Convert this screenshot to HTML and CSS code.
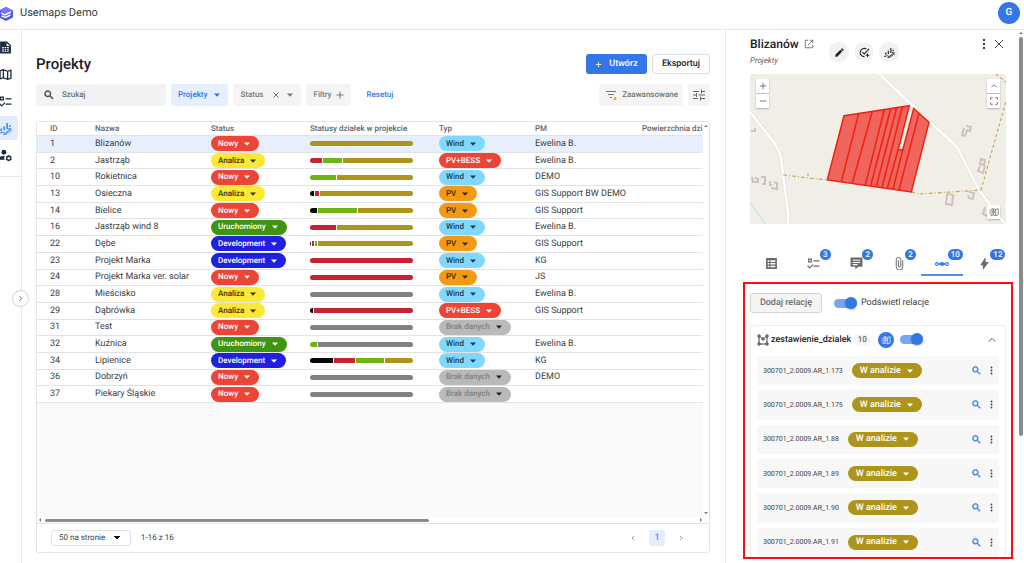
FILE: index.html
```html
<!DOCTYPE html>
<html lang="pl">
<head>
<meta charset="utf-8">
<title>Usemaps Demo</title>
<link rel="stylesheet" href="styles.css">
</head>
<body>
<svg class="defs" aria-hidden="true">
  <symbol id="caret" viewBox="0 0 8 8"><path d="M1 2.500h6L4 5.700z"/></symbol>
  <symbol id="search" viewBox="0 0 24 24"><path stroke="currentColor" stroke-width=".8" d="M9.500 3a6.500 6.500 0 0 1 4.900 10.800l.3.2h.8l5 5-1.500 1.500-5-5v-.8l-.2-.3A6.500 6.500 0 1 1 9.500 3m0 2a4.500 4.500 0 1 0 0 9 4.500 4.500 0 0 0 0-9z"/></symbol>
  <symbol id="dots" viewBox="0 0 24 24"><circle cx="12" cy="4" r="2.400"/><circle cx="12" cy="12" r="2.400"/><circle cx="12" cy="20" r="2.400"/></symbol>
  <symbol id="tasks" viewBox="0 0 24 24"><path fill="none" stroke="currentColor" stroke-width="2.200" d="M3 4h5v5H3zM12 7h11M12 17h11M1 16l4 4 6-6"/></symbol>
  <symbol id="chart" viewBox="0 0 24 24"><path fill="none" stroke="currentColor" stroke-width="2.600" d="M4 12v5M9.500 8v7M15 2v11M20 6v3"/><path fill="none" stroke="currentColor" stroke-width="1.800" d="M0 21l7-2 4 2 10-8M17 12.500h5v5M8 23h4l8-6"/></symbol>
  <symbol id="map" viewBox="0 0 24 24"><path fill="none" stroke="currentColor" stroke-width="2.400" d="M2 5l6-2 8 3 6-2v15l-6 2-8-3-6 2zM8 3v15M16 6v15"/></symbol>
  <symbol id="mapsel" viewBox="0 0 24 24"><path fill="none" stroke="currentColor" stroke-width="1.700" d="M5 6l5-2 6 2 6-2v15l-6 2-6-2-5 2v-5M10 4v15M16 6v15M1 9h12v5H1"/></symbol>
</svg>

<header class="topbar">
  <svg class="logo" viewBox="0 0 16 16"><path fill="#4a54ee" d="M8 1l7 3.500v7L8 15l-7-3.500v-7z"/><path fill="#6f78ff" d="M8 1l7 3.500L8 8 1 4.500z"/><path fill="none" stroke="#fff" stroke-width="1.500" d="M3 7l4 2 6-3M3.500 10l4 1.500L12.500 9"/></svg>
  <span class="brand">Usemaps Demo</span>
  <button class="avatar">G</button>
</header>

<div class="shell">
  <nav class="rail" aria-label="Menu">
    <a class="rail-item" href="#" aria-label="Dokumenty"><svg viewBox="0 0 24 24"><path fill="currentColor" fill-rule="evenodd" d="M2 1h13l7 7v15H2zM6 11v9h12v-9zM14 3v6h6z"/><path fill="none" stroke="currentColor" stroke-width="1.500" d="M6 14h12M6 17h12M10 11v9M14 11v9"/></svg></a>
    <a class="rail-item" href="#" aria-label="Mapa"><svg><use href="#map"/></svg></a>
    <a class="rail-item" href="#" aria-label="Zadania"><svg><use href="#tasks"/></svg></a>
    <a class="rail-item is-active" href="#" aria-label="Projekty"><svg><use href="#chart"/></svg></a>
    <a class="rail-item" href="#" aria-label="Administracja"><svg viewBox="0 0 24 24"><circle cx="9" cy="6" r="4.500" fill="currentColor"/><path fill="currentColor" d="M0 20v-3c0-3 5-4.500 11-4.200-2 2.200-2 5 0 7.200z"/><circle cx="18" cy="17" r="3.700" fill="none" stroke="currentColor" stroke-width="2.500"/><path stroke="currentColor" stroke-width="2" stroke-dasharray="2 7.600" d="M18 11v12M12.800 14l10.400 6M12.800 20l10.400-6"/></svg></a>
  </nav>

  <main class="main">
    <button class="expander" aria-label="Rozwiń"><svg viewBox="0 0 8 8"><path class="line" d="M3 1.500L5.500 4 3 6.500"/></svg></button>
    <div class="title-row">
      <h1>Projekty</h1>
      <button class="btn primary"><svg viewBox="0 0 8 8"><path class="line" d="M4 1v6M1 4h6"/></svg>Utwórz</button>
      <button class="btn outline">Eksportuj</button>
    </div>

    <div class="filters">
      <label class="search"><svg><use href="#search"/></svg><input type="text" placeholder="Szukaj" aria-label="Szukaj"></label>
      <button class="chip blue">Projekty<svg><use href="#caret"/></svg></button>
      <button class="chip">Status<svg class="cross" viewBox="0 0 8 8"><path class="line" d="M1.500 1.500l5 5M6.500 1.500l-5 5"/></svg><svg><use href="#caret"/></svg></button>
      <button class="chip add">Filtry<svg viewBox="0 0 8 8"><path class="line" d="M4 .5v7M.5 4h7"/></svg></button>
      <button class="reset">Resetuj</button>
      <button class="chip advanced"><svg viewBox="0 0 12 12"><path class="line" d="M1 2.500h10M3 5.500h6M5 8.500h2"/><circle cx="10" cy="9.500" r="1.500" fill="#f0a51c"/></svg>Zaawansowane</button>
      <button class="chip square" aria-label="Kolumny"><svg viewBox="0 0 12 12"><path class="line" d="M0 2.500h6M9 2.500h3M8.500.5v4M0 6h3M5.500 6H12M3.500 4v4M0 9.500h5M8 9.500h4M7.500 7.500v4"/></svg></button>
    </div>

    <section class="grid-card">
      <div class="grid-view">
        <div class="grid-scroll">
          <table>
            <colgroup><col class="c-id"><col class="c-name"><col class="c-status"><col class="c-bar"><col class="c-type"><col class="c-pm"><col></colgroup>
            <thead><tr><th>ID</th><th>Nazwa</th><th>Status</th><th>Statusy działek w projekcie</th><th>Typ</th><th>PM</th><th>Powierzchnia dzi</th></tr></thead>
            <tbody>
              <tr class="selected"><td>1</td><td>Blizanów</td><td><button class="pill red">Nowy<svg><use href="#caret"/></svg></button></td><td><div class="bar"><i class="s-gold"></i></div></td><td><button class="pill sky">Wind<svg><use href="#caret"/></svg></button></td><td>Ewelina B.</td><td></td></tr>
              <tr><td>2</td><td>Jastrząb</td><td><button class="pill yellow">Analiza<svg><use href="#caret"/></svg></button></td><td><div class="bar"><i class="s-red" style="width:12%"></i><i class="s-green" style="width:18%"></i><i class="s-gold"></i></div></td><td><button class="pill red">PV+BESS<svg><use href="#caret"/></svg></button></td><td>Ewelina B.</td><td></td></tr>
              <tr><td>10</td><td>Rokietnica</td><td><button class="pill red">Nowy<svg><use href="#caret"/></svg></button></td><td><div class="bar"><i class="s-green" style="width:25%"></i><i class="s-gold"></i></div></td><td><button class="pill sky">Wind<svg><use href="#caret"/></svg></button></td><td>DEMO</td><td></td></tr>
              <tr><td>13</td><td>Osieczna</td><td><button class="pill yellow">Analiza<svg><use href="#caret"/></svg></button></td><td><div class="bar"><i class="s-black" style="width:4%"></i><i class="s-red" style="width:4%"></i><i class="s-gold"></i></div></td><td><button class="pill orange">PV<svg><use href="#caret"/></svg></button></td><td>GIS Support BW DEMO</td><td></td></tr>
              <tr><td>14</td><td>Bielice</td><td><button class="pill red">Nowy<svg><use href="#caret"/></svg></button></td><td><div class="bar"><i class="s-black" style="width:7%"></i><i class="s-green" style="width:38%"></i><i class="s-gold"></i></div></td><td><button class="pill orange">PV<svg><use href="#caret"/></svg></button></td><td>GIS Support</td><td></td></tr>
              <tr><td>16</td><td>Jastrząb wind 8</td><td><button class="pill green">Uruchomiony<svg><use href="#caret"/></svg></button></td><td><div class="bar"><i class="s-red" style="width:25%"></i><i class="s-gold"></i></div></td><td><button class="pill sky">Wind<svg><use href="#caret"/></svg></button></td><td>Ewelina B.</td><td></td></tr>
              <tr><td>22</td><td>Dębe</td><td><button class="pill navy">Development<svg><use href="#caret"/></svg></button></td><td><div class="bar"><i class="s-black" style="width:1%"></i><i class="s-red" style="width:2%"></i><i class="s-green" style="width:2%"></i><i class="s-gold"></i></div></td><td><button class="pill orange">PV<svg><use href="#caret"/></svg></button></td><td>GIS Support</td><td></td></tr>
              <tr><td>23</td><td>Projekt Marka</td><td><button class="pill navy">Development<svg><use href="#caret"/></svg></button></td><td><div class="bar"><i class="s-red"></i></div></td><td><button class="pill sky">Wind<svg><use href="#caret"/></svg></button></td><td>KG</td><td></td></tr>
              <tr><td>24</td><td>Projekt Marka ver. solar</td><td><button class="pill red">Nowy<svg><use href="#caret"/></svg></button></td><td><div class="bar"><i class="s-red"></i></div></td><td><button class="pill orange">PV<svg><use href="#caret"/></svg></button></td><td>JS</td><td></td></tr>
              <tr><td>28</td><td>Mieścisko</td><td><button class="pill yellow">Analiza<svg><use href="#caret"/></svg></button></td><td><div class="bar"><i class="s-gray"></i></div></td><td><button class="pill sky">Wind<svg><use href="#caret"/></svg></button></td><td>Ewelina B.</td><td></td></tr>
              <tr><td>29</td><td>Dąbrówka</td><td><button class="pill yellow">Analiza<svg><use href="#caret"/></svg></button></td><td><div class="bar"><i class="s-black" style="width:3%"></i><i class="s-red"></i></div></td><td><button class="pill red">PV+BESS<svg><use href="#caret"/></svg></button></td><td>GIS Support</td><td></td></tr>
              <tr><td>31</td><td>Test</td><td><button class="pill red">Nowy<svg><use href="#caret"/></svg></button></td><td><div class="bar"><i class="s-gray"></i></div></td><td><button class="pill none">Brak danych<svg><use href="#caret"/></svg></button></td><td></td><td></td></tr>
              <tr><td>32</td><td>Kuźnica</td><td><button class="pill green">Uruchomiony<svg><use href="#caret"/></svg></button></td><td><div class="bar"><i class="s-green" style="width:7%"></i><i class="s-gray"></i></div></td><td><button class="pill sky">Wind<svg><use href="#caret"/></svg></button></td><td>Ewelina B.</td><td></td></tr>
              <tr><td>34</td><td>Lipienice</td><td><button class="pill navy">Development<svg><use href="#caret"/></svg></button></td><td><div class="bar"><i class="s-black" style="width:22%"></i><i class="s-red" style="width:21%"></i><i class="s-green" style="width:27%"></i><i class="s-gold"></i></div></td><td><button class="pill sky">Wind<svg><use href="#caret"/></svg></button></td><td>KG</td><td></td></tr>
              <tr><td>36</td><td>Dobrzyń</td><td><button class="pill red">Nowy<svg><use href="#caret"/></svg></button></td><td><div class="bar"><i class="s-gray"></i></div></td><td><button class="pill none">Brak danych<svg><use href="#caret"/></svg></button></td><td>DEMO</td><td></td></tr>
              <tr><td>37</td><td>Piekary Śląskie</td><td><button class="pill red">Nowy<svg><use href="#caret"/></svg></button></td><td><div class="bar"><i class="s-gray"></i></div></td><td><button class="pill none">Brak danych<svg><use href="#caret"/></svg></button></td><td></td><td></td></tr>
            </tbody>
          </table>
        </div>
        <div class="vbar"><svg viewBox="0 0 4 4"><path d="M0 3h4L2 1z"/></svg><svg viewBox="0 0 4 4"><path d="M0 1h4L2 3z"/></svg></div>
      </div>
      <div class="hbar"><svg viewBox="0 0 4 4"><path d="M3 0v4L1 2z"/></svg><div class="htrack"><div class="hthumb"></div></div><svg viewBox="0 0 4 4"><path d="M1 0v4l2-2z"/></svg></div>
      <footer class="pager">
        <select aria-label="Wierszy na stronie"><option>50 na stronie</option></select>
        <span class="count">1-16 z 16</span>
        <button class="page" aria-label="Poprzednia"><svg viewBox="0 0 8 8"><path class="line" d="M5 2L3 4l2 2"/></svg></button>
        <button class="page current">1</button>
        <button class="page" aria-label="Następna"><svg viewBox="0 0 8 8"><path class="line" d="M3 2l2 2-2 2"/></svg></button>
      </footer>
    </section>
  </main>

  <aside class="panel">
    <div class="panel-body">
      <div class="panel-head">
        <div class="heading">
          <h2>Blizanów <svg viewBox="0 0 12 12"><path class="line" d="M5 1.500H1.500v9h9V7M7 1.500h3.500V5M10.500 1.500L4.500 7.500"/></svg></h2>
          <p>Projekty</p>
        </div>
        <div class="actions">
          <button aria-label="Edytuj"><svg viewBox="0 0 24 24"><path fill="currentColor" d="M3 17v4h4L18 10l-4-4zM20.700 7.300a1.200 1.200 0 0 0 0-1.700l-2.300-2.300a1.200 1.200 0 0 0-1.700 0L15 5l4 4z"/></svg></button>
          <button aria-label="Dodaj zadanie"><svg viewBox="0 0 24 24"><path fill="none" stroke="currentColor" stroke-width="2.300" d="M16 4.200A9 9 0 1 0 12 21M7.500 11l4 4L22 4M18.500 14v8M14.500 18h8"/></svg></button>
          <button aria-label="Wykres"><svg><use href="#chart"/></svg></button>
        </div>
        <div class="window-tools">
          <button aria-label="Więcej"><svg><use href="#dots"/></svg></button>
          <button aria-label="Zamknij"><svg viewBox="0 0 12 12"><path class="line" d="M2 2l8 8M10 2l-8 8"/></svg></button>
        </div>
      </div>

      <div class="map">
        <svg class="map-art" viewBox="0 0 256 150" preserveAspectRatio="xMidYMid slice">
          <rect width="256" height="150" fill="#f1eee8"/>
          <path d="M0 128l15 22" stroke="#a9dce8" stroke-width="1" fill="none"/>
          <g fill="none" stroke="#dcdad6" stroke-width="3.600"><path id="road-a" d="M127-2l80 75 22 43 26 34"/><path id="road-b" d="M0 38l22 28q7 9 9 18l7 55v12"/></g>
          <g fill="none" stroke="#fff" stroke-width="2.600"><use href="#road-a"/><use href="#road-b"/></g>
          <g fill="none" stroke="#c5a561" stroke-width="1.200" stroke-dasharray="4 2 1 2"><path d="M33 101l44 5M161 118l9 2 61-4"/><path stroke-dasharray="3 2.500" d="M231 116l25-89M246 0l11 9"/></g>
          <g fill="none" stroke="#cfc2bb" stroke-width="2"><path d="M216 52l5 1-1 4-3-1-2 6-3-1 2-7M231 85l4 1-1 5-4-1zM230 92l-2 5 5 2 2-7M197 120l6 1-1 10-6-1zM219 118l5 1-1 6-4-1-1-3M235 133l-2 7 4 2M1 57h4v-3M2 103l1 5h5v-3l-3-1M11 103h4v7h-3M20 107v4h2M24 108l3 1v6l-6-1M58 99v3"/></g>
          <path d="M94 41.700L159.300 31.700 148.300 75.300 152.700 76.300 163.700 34.300 179 48.300 161.300 118 77.300 106z" fill="#f0655e" stroke="#ee2211" stroke-width="1.500"/>
          <path fill="none" stroke="#ee2211" stroke-width="1.500" d="M108.700 39.300L91.300 107.700M122.300 37.300L102.300 109.300M134.300 35.700L115.300 111M140.700 34.700L120.700 111.700M146.700 33.700L126.300 112.300M152.300 33L132 113.300M148.300 75.300L137.300 114.300M152.700 76.300L143 115.300M169 39.300L149 116"/>
        </svg>
        <div class="map-tools left"><button aria-label="Przybliż"><svg viewBox="0 0 12 12"><path class="line" d="M6 2v8M2 6h8"/></svg></button><button aria-label="Oddal"><svg viewBox="0 0 12 12"><path class="line" d="M2 6h8"/></svg></button></div>
        <div class="map-tools right"><button aria-label="Zwiń mapę"><svg viewBox="0 0 12 12"><path class="line" d="M3 7.500l3-3 3 3"/></svg></button><button aria-label="Pełny ekran"><svg viewBox="0 0 12 12"><path class="line" d="M2 4.500V2h2.500M7.500 2H10v2.500M10 7.500V10H7.500M4.500 10H2V7.500"/></svg></button></div>
        <div class="map-tools bottom"><button aria-label="Warstwy"><svg><use href="#mapsel"/></svg></button></div>
      </div>

      <div class="tabs" role="tablist">
        <button role="tab" aria-label="Atrybuty"><svg viewBox="0 0 24 24"><path fill="currentColor" fill-rule="evenodd" d="M2 2h20v20H2zM5 6v3h3V6zM10 6v3h9V6zM5 11v3h3v-3zM10 11v3h9v-3zM5 16v3h3v-3zM10 16v3h9v-3z"/></svg></button>
        <button role="tab" aria-label="Zadania"><svg><use href="#tasks"/></svg><span class="badge">3</span></button>
        <button role="tab" aria-label="Komentarze"><svg viewBox="0 0 24 24"><path fill="currentColor" fill-rule="evenodd" d="M1 1h22v17H15l-5 5v-5H1zM5 5v2h14V5zM5 9v2h14V9zM5 13v2h9v-2z"/></svg><span class="badge">2</span></button>
        <button role="tab" aria-label="Załączniki"><svg viewBox="0 0 24 24"><path fill="none" stroke="currentColor" stroke-width="1.800" d="M18 6v12a6 6 0 0 1-12 0V5a4 4 0 0 1 8.500 0v12a2.300 2.300 0 0 1-4.500 0V6"/></svg><span class="badge">2</span></button>
        <button role="tab" aria-label="Relacje" aria-selected="true"><svg viewBox="0 0 24 24"><path stroke="currentColor" stroke-width="2.500" d="M4 12h16"/><circle cx="3.500" cy="12" r="2.500" fill="#fff" stroke="currentColor" stroke-width="2"/><circle cx="12" cy="12" r="3.600" fill="currentColor"/><circle cx="20.500" cy="12" r="2.500" fill="#fff" stroke="currentColor" stroke-width="2"/></svg><span class="badge">10</span></button>
        <button role="tab" aria-label="Akcje"><svg viewBox="0 0 24 24"><path fill="currentColor" d="M14 0v9h6L9 24v-9H4z"/></svg><span class="badge">12</span></button>
      </div>

      <section class="relations">
        <div class="rel-bar">
          <button class="add-rel">Dodaj relację</button>
          <label><input class="switch" type="checkbox" checked>Podświetl relacje</label>
        </div>
        <div class="accordion">
          <div class="acc-head">
            <svg class="poly" viewBox="0 0 12 12"><path class="line" d="M1 1h2v2H1zM9 1h2v2H9zM1 9h2v2H1zM9 9h2v2H9zM5 4h2v2H5zM2 3v6M10 3v6M3 10h6M3 2.500L5 4.500M9 2.500L7 4.500"/></svg>
            <strong>zestawienie_dzialek</strong>
            <span class="total">10</span>
            <button class="round" aria-label="Pokaż na mapie"><svg><use href="#mapsel"/></svg></button>
            <input class="switch" type="checkbox" checked aria-label="Podświetl">
            <button class="fold" aria-label="Zwiń"><svg viewBox="0 0 12 12"><path class="line" d="M2 8l4-4 4 4"/></svg></button>
          </div>
          <ul class="parcels">
            <li><span>300701_2.0009.AR_1.173</span><button class="pill gold">W analizie<svg><use href="#caret"/></svg></button><button class="ico find" aria-label="Znajdź"><svg><use href="#search"/></svg></button><button class="ico" aria-label="Więcej"><svg><use href="#dots"/></svg></button></li>
            <li><span>300701_2.0009.AR_1.175</span><button class="pill gold">W analizie<svg><use href="#caret"/></svg></button><button class="ico find" aria-label="Znajdź"><svg><use href="#search"/></svg></button><button class="ico" aria-label="Więcej"><svg><use href="#dots"/></svg></button></li>
            <li><span>300701_2.0009.AR_1.88</span><button class="pill gold">W analizie<svg><use href="#caret"/></svg></button><button class="ico find" aria-label="Znajdź"><svg><use href="#search"/></svg></button><button class="ico" aria-label="Więcej"><svg><use href="#dots"/></svg></button></li>
            <li><span>300701_2.0009.AR_1.89</span><button class="pill gold">W analizie<svg><use href="#caret"/></svg></button><button class="ico find" aria-label="Znajdź"><svg><use href="#search"/></svg></button><button class="ico" aria-label="Więcej"><svg><use href="#dots"/></svg></button></li>
            <li><span>300701_2.0009.AR_1.90</span><button class="pill gold">W analizie<svg><use href="#caret"/></svg></button><button class="ico find" aria-label="Znajdź"><svg><use href="#search"/></svg></button><button class="ico" aria-label="Więcej"><svg><use href="#dots"/></svg></button></li>
            <li><span>300701_2.0009.AR_1.91</span><button class="pill gold">W analizie<svg><use href="#caret"/></svg></button><button class="ico find" aria-label="Znajdź"><svg><use href="#search"/></svg></button><button class="ico" aria-label="Więcej"><svg><use href="#dots"/></svg></button></li>
          </ul>
        </div>
      </section>
    </div>
    <div class="panel-scroll"><svg viewBox="0 0 4 4"><path d="M0 3h4L2 1z"/></svg><div class="panel-thumb"></div></div>
  </aside>
</div>
</body>
</html>
```

FILE: styles.css
```css
* { box-sizing: border-box; }
body {
  margin: 0;
  height: 100vh;
  display: flex;
  flex-direction: column;
  overflow: hidden;
  background: #fff;
  color: #3c4043;
  font: 9px/12px Roboto, "Liberation Sans", sans-serif;
  text-rendering: geometricPrecision;
}
button, input, select { font: inherit; color: inherit; margin: 0; text-rendering: inherit; }
button { border: 0; padding: 0; background: none; display: inline-flex; align-items: center; justify-content: center; white-space: nowrap; }
svg { display: block; fill: currentColor; flex: none; }
.line { fill: none; stroke: currentColor; stroke-width: 1; }
.defs { position: absolute; width: 0; height: 0; }

.topbar { display: flex; align-items: center; height: 30px; padding-right: 4px; border-bottom: 1px solid #e6e7e9; }
.logo { width: 16px; height: 16px; margin-left: -2px; margin-bottom: 2px; }
.brand { margin-left: 6px; margin-bottom: 3px; font-size: 11px; color: #3c4043; }
.avatar { width: 22px; height: 22px; margin-left: auto; margin-bottom: 3px; border-radius: 50%; background: #3376e8; color: #fff; font-size: 10px; font-weight: 500; }

.shell { display: flex; flex: 1; min-height: 0; }
.rail { width: 22px; padding-top: 5px; border-right: 1px solid #e6e7e9; color: #1d2b3e; }
.rail-item { display: flex; align-items: center; width: 18px; height: 24px; margin-bottom: 3px; border-radius: 0 2px 2px 0; color: inherit; }
.rail-item:last-child { width: 21px; height: 34px; padding-bottom: 8px; border-bottom: 1px solid #e6e7e9; border-radius: 0; }
.rail-item svg { width: 13px; height: 13px; margin-left: -1px; }
.rail-item.is-active { background: #e1edfd; color: #3376e8; }

.main { position: relative; display: flex; flex: 1; flex-direction: column; min-width: 0; padding: 24px 15px 10px 14px; }
.expander { position: absolute; top: 260px; left: -10px; width: 17px; height: 17px; border: 1px solid #cfd1d4; border-radius: 50%; background: #fff; }
.expander svg { width: 7px; height: 7px; }
.title-row { display: flex; align-items: center; gap: 5px; }
h1 { flex: 1; margin: 0; font-size: 15px; line-height: 20px; font-weight: 500; color: #202124; }
.btn { height: 20px; border-radius: 3px; font-weight: 500; }
.primary { gap: 7px; width: 61px; background: #3376e8; color: #fff; }
.primary svg { width: 7px; height: 7px; }
.outline { width: 58px; border: 1px solid #dadce0; color: #202124; }

.filters { display: flex; align-items: center; gap: 5px; margin-top: 10px; }
.search { display: flex; align-items: center; gap: 7px; width: 130px; height: 22px; padding: 0 7px; border-radius: 3px; background: #f1f3f5; }
.search svg { width: 12px; height: 12px; }
.search input { flex: 1; min-width: 0; padding: 0; border: 0; outline: 0; background: none; font-size: 8px; }
.search input::placeholder { color: #4d5156; opacity: 1; }
.chip { gap: 6px; height: 22px; padding: 0 7px; border-radius: 3px; background: #f4f4f4; color: #757575; font-size: 8px; font-weight: 500; }
.chip svg { width: 8px; height: 8px; }
.chip .cross { margin-left: 3px; }
.chip.blue { background: #e6effd; color: #3376e8; }
.chip.add { gap: 5px; }
.chip.advanced { gap: 5px; margin-left: auto; padding: 0 5px 0 6px; }
.chip.advanced svg, .chip.square svg { width: 12px; height: 12px; }
.chip.square { width: 22px; padding: 0; color: #5f6368; }
.reset { margin-left: 10px; color: #3376e8; font-size: 8px; font-weight: 500; }

.grid-card { display: flex; flex: 1; flex-direction: column; min-height: 0; margin-top: 15px; border: 1px solid #e4e5e7; border-radius: 3px; }
.grid-view { display: flex; flex: 1; min-height: 0; }
.grid-scroll { flex: 1; min-width: 0; overflow: hidden; background: #fafafa; }
.vbar { display: flex; flex-direction: column; justify-content: space-between; align-items: center; width: 6px; padding: 2px 0; color: #757575; }
.vbar svg, .hbar svg { width: 4px; height: 4px; }
table { width: 100%; height: 281px; border-collapse: separate; border-spacing: 0; table-layout: fixed; background: #fff; }
.c-id { width: 58px; }
.c-name { width: 116px; }
.c-status { width: 99px; }
.c-bar { width: 129px; }
.c-type { width: 96px; }
.c-pm { width: 107px; }
th, td { padding: 0; border-bottom: 1px solid #e2e3e5; text-align: left; white-space: nowrap; overflow: hidden; vertical-align: middle; }
th:first-child, td:first-child { padding-left: 13px; }
th { height: 14px; font-size: 8px; font-weight: 500; color: #5f6368; line-height: 12px; }
td { line-height: 12px; }
.selected td { background: #e8effc; }
.pill { display: flex; gap: 5px; height: 15px; padding: 0 8px 0 7px; border-radius: 8px; font-size: 8px; font-weight: 500; }
.pill svg { width: 8px; height: 8px; }
.red { background: #ec4435; color: #fff; }
.yellow { background: #fbe936; color: #33300a; }
.green { background: #3f9410; color: #fff; }
.navy { background: #2020e0; color: #fff; }
.sky { background: #80d8ff; color: #1a3a47; }
.orange { background: #f29a15; color: #3b2607; }
.none { background: #b9b9b9; color: #808080; }
.none svg { color: #222; }
.gold { background: #ad951c; color: #fff; }
.bar { display: flex; gap: 1px; width: 103px; height: 5px; border-radius: 3px; overflow: hidden; }
.bar i:last-child { flex: 1; }
.s-gold { background: #ad951c; }
.s-red { background: #c82333; }
.s-green { background: #6cb513; }
.s-black { background: #080808; }
.s-gray { background: #818181; }
.hbar { display: flex; align-items: center; gap: 3px; height: 6px; padding: 0 6px 0 1px; color: #757575; }
.htrack { flex: 1; }
.hthumb { width: 59%; height: 3px; border-radius: 2px; background: #8b8b8b; }
.pager { display: flex; align-items: center; height: 29px; padding: 0 20px 0 14px; border-top: 1px solid #e4e5e7; font-size: 8px; }
.pager select {
  width: 80px; height: 16px; padding: 0 7px; border: 1px solid #e0e1e3; border-radius: 3px; appearance: none;
  background: linear-gradient(to bottom left, #111 50%, transparent 51%) 62px 5px / 3px 4px no-repeat, linear-gradient(to bottom right, #111 50%, transparent 51%) 65px 5px / 3px 4px no-repeat;
}
.count { margin: 0 auto 0 10px; }
.page { width: 16px; height: 16px; margin-left: 8px; border-radius: 2px; color: #9aa0a6; }
.page svg { width: 8px; height: 8px; }
.page.current { background: #e4eefd; color: #3376e8; font-size: 9px; }

.panel { display: flex; width: 299px; border-left: 1px solid #e6e7e9; }
.panel-body { display: flex; flex: 1; flex-direction: column; min-width: 0; padding: 6px 6px 4px 17px; }
.panel-head { display: flex; margin-left: 7px; height: 38px; }
.heading { width: 79px; }
h2 { display: flex; align-items: center; gap: 5px; margin: 0; font-size: 12px; line-height: 16px; font-weight: 500; color: #202124; }
h2 svg { width: 10px; height: 10px; color: #5f6368; }
.heading p { margin: 3px 0 0; font-size: 8px; line-height: 12px; font-style: italic; color: #5f6368; }
.actions { display: flex; gap: 5px; padding-top: 6px; }
.actions button { width: 20px; height: 20px; border-radius: 50%; background: #f2f2f2; color: #202124; }
.actions svg { width: 11px; height: 11px; }
.window-tools { display: flex; gap: 3px; margin-left: auto; margin-right: 8px; height: 15px; color: #3c4043; }
.window-tools svg { width: 12px; height: 12px; }
.map { position: relative; height: 150px; margin: 0 7px; border-radius: 3px; overflow: hidden; }
.map-art { width: 100%; height: 100%; }
.map-tools { position: absolute; display: grid; gap: 1px; }
.map-tools.left { top: 5px; left: 6px; }
.map-tools.right { top: 5px; right: 6px; }
.map-tools.bottom { right: 6px; bottom: 5px; }
.map-tools button { width: 13px; height: 14px; border-radius: 1px; background: #fff; box-shadow: 0 1px 2px #0004; color: #5f6368; }
.map-tools svg { width: 10px; height: 10px; }

.tabs { display: grid; grid-template-columns: repeat(6, 1fr); height: 27px; margin: 25px 7px 0; color: #6a6a6a; }
.tabs button { position: relative; padding-top: 4px; border-bottom: 2px solid transparent; }
.tabs svg { width: 13px; height: 13px; }
.tabs [aria-selected="true"] { border-color: #5290ee; color: #3376e8; }
.tabs [aria-selected="true"] svg { width: 14px; height: 14px; }
.badge { position: absolute; top: 0; left: 27px; min-width: 11px; height: 11px; padding: 0 3px; border-radius: 6px; background: #3376e8; color: #fff; font-size: 8px; line-height: 11px; font-weight: 500; text-align: center; }

.relations { display: flex; flex: 1; flex-direction: column; min-height: 0; margin-top: 6px; padding: 9px 5px 0; border: 2px solid #fd0d10; }
.rel-bar { display: flex; align-items: center; gap: 12px; }
.add-rel { width: 72px; height: 20px; border: 1px solid #d2d4d7; border-radius: 3px; background: #f4f4f5; color: #6d7074; font-weight: 500; }
.rel-bar label { display: flex; align-items: center; gap: 4px; }
.switch { position: relative; width: 23px; height: 9px; border-radius: 5px; background: #76a7f2; appearance: none; }
.switch::before { content: ""; position: absolute; top: -2px; right: 0; width: 12px; height: 12px; border-radius: 50%; background: #3376e8; box-shadow: 0 1px 2px #0004; }
.accordion { display: flex; flex: 1; flex-direction: column; margin-top: 12px; padding: 0 6px; border: 1px solid #ededee; border-bottom: 0; border-radius: 3px 3px 0 0; }
.acc-head { display: flex; align-items: center; height: 27px; }
.poly { width: 12px; height: 12px; }
.acc-head strong { margin-left: 2px; font-weight: 500; color: #202124; }
.total { width: 16px; margin-left: 3px; border-radius: 6px; background: #f5f5f5; font-size: 8px; text-align: center; }
.round { width: 16px; height: 16px; margin: 0 6px 0 8px; border-radius: 50%; background: #3376e8; color: #fff; }
.round svg { width: 10px; height: 10px; }
.fold { margin-left: auto; margin-right: 2px; }
.fold svg { width: 10px; height: 10px; }
.parcels { display: flex; flex: 1; flex-direction: column; gap: 5px; margin: 3px 0 0; padding: 0; list-style: none; }
.parcels li { display: flex; flex: 1; align-items: center; padding: 0 3px 0 6px; border-radius: 3px; background: #f7f7f7; font-size: 7px; }
.parcels .pill { margin: 0 auto 0 9px; padding: 0 8px; font-size: 9px; }
.ico { width: 10px; height: 12px; margin-left: 5px; }
.ico svg { width: 9px; height: 9px; }
.ico.find { color: #3376e8; }
.ico.find svg { width: 11px; height: 11px; }
.panel-scroll { width: 5px; padding-top: 1px; color: #757575; }
.panel-scroll svg { width: 4px; height: 4px; }
.panel-thumb { width: 4px; height: 75%; margin-top: 2px; border-radius: 2px; background: #8b8b8b; }
```
